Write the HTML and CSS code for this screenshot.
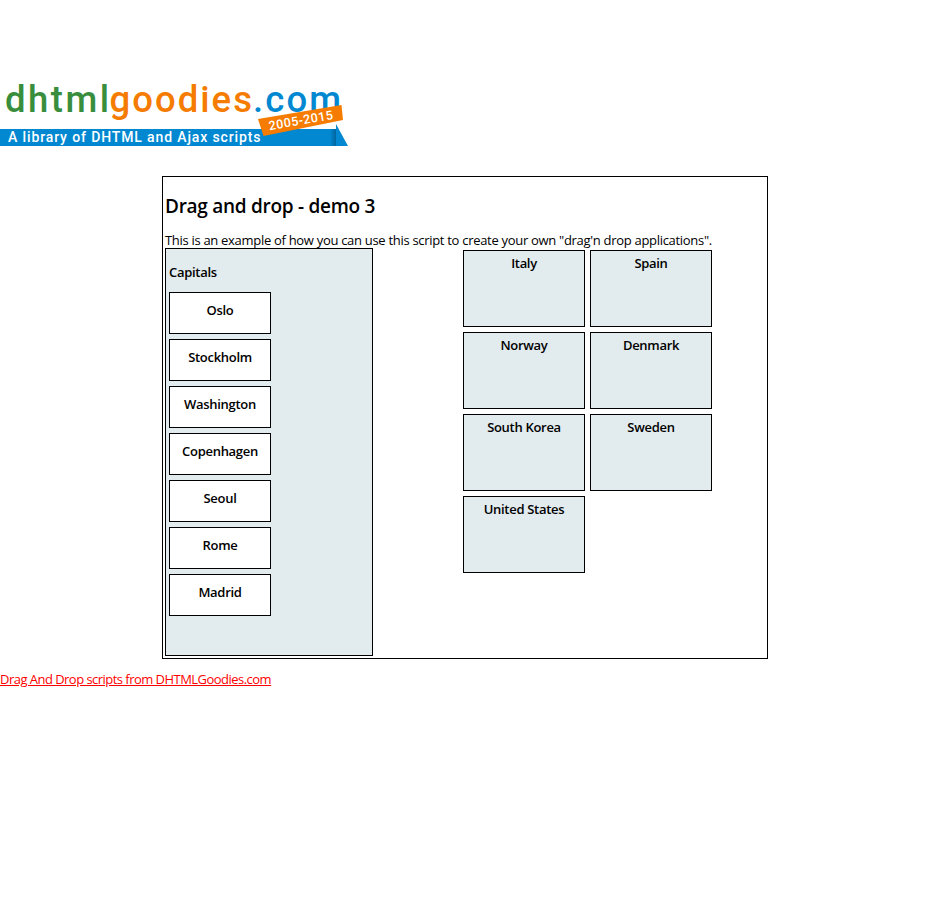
FILE: index.html
```html
<!DOCTYPE html>
<html lang="en">
<head>
<meta charset="utf-8">
<title>Drag and drop - demo 3</title>
<link rel="stylesheet" href="styles.css">
</head>
<body>
<header class="header">
<svg class="logo" width="350" height="90" viewBox="0 -20 350 90" role="img" aria-label="dhtmlgoodies.com">
  <defs>
    <linearGradient id="fold" x1="0" x2="1"><stop offset="0" stop-color="#0288d1"/><stop offset="1" stop-color="#03649d"/></linearGradient>
  </defs>
  <g class="wordmark">
    <text class="green" x="5" y="31.500" textLength="104">dhtml</text>
    <text class="orange" x="109.500" y="31.500" textLength="142.500">goodies</text>
    <text class="blue" x="253" y="31.500" textLength="88">.com</text>
  </g>
  <path class="blue" d="M0 49H336V66H0z"/>
  <path fill="url(#fold)" d="M330 49h6v17h-6z"/>
  <path class="blue" d="M336 44 348 66H336z"/>
  <path class="orange" d="M258 39 341.500 25 343 40 263.500 56z"/>
  <text class="tagline" x="8" y="62.300" textLength="252.500">A library of DHTML and Ajax scripts</text>
  <text class="years" transform="translate(269.500 50.200) rotate(-10)" textLength="65">2005-2015</text>
</svg>
</header>
<main class="main">
  <h1 class="title"><span>Drag and drop - demo 3</span></h1>
  <p class="intro">This is an example of how you can use this script to create your own "drag'n drop applications".</p>
  <div class="board">
    <section class="capitals">
      <h2 class="heading">Capitals</h2>
      <div class="list">
        <div class="capital">Oslo</div>
        <div class="capital">Stockholm</div>
        <div class="capital">Washington</div>
        <div class="capital">Copenhagen</div>
        <div class="capital">Seoul</div>
        <div class="capital">Rome</div>
        <div class="capital">Madrid</div>
      </div>
    </section>
    <section class="countries">
      <div class="country">Italy</div>
      <div class="country">Spain</div>
      <div class="country">Norway</div>
      <div class="country">Denmark</div>
      <div class="country">South Korea</div>
      <div class="country">Sweden</div>
      <div class="country">United States</div>
    </section>
  </div>
</main>
<footer class="footer"><a class="link" href="#">Drag And Drop scripts from DHTMLGoodies.com</a></footer>
</body>
</html>
```
FILE: styles.css
```css
* { box-sizing: border-box; }
body {
  margin: 0;
  background: #fff;
  color: #000;
  font: 13px/16px "Trebuchet MS", "Open Sans", sans-serif;
  letter-spacing: -0.3px;
}
.header { padding-top: 60px; height: 176px; }
.logo { display: block; letter-spacing: normal; font-family: Roboto, sans-serif; }
.wordmark { font-size: 36.5px; font-weight: 500; }
.green { fill: #388e3c; }
.orange { fill: #f57c00; }
.blue { fill: #0288d1; }
.tagline { fill: #fff; font-size: 14px; font-weight: 500; }
.years { fill: #fff; font-size: 12.5px; font-weight: 500; }
.main {
  width: 606px;
  height: 483px;
  margin: 0 auto 0 162px;
  padding: 0 2px;
  border: 1px solid #000;
}
.title {
  margin: 18px 0 14px;
  font-size: 19px;
  line-height: 23px;
  font-weight: 600;
  letter-spacing: -0.28px;
}
.intro { margin: 0; height: 16px; white-space: nowrap; }
.board { display: flex; justify-content: space-between; padding-right: 53px; }
.capitals {
  width: 208px;
  height: 408px;
  padding: 15px 3px 0;
  border: 1px solid #000;
  background: #e2ebed;
}
.heading { margin: 0 0 12px; font-size: 13px; line-height: 16px; font-weight: 600; }
.list { display: grid; gap: 5px; }
.capital {
  width: 102px;
  height: 42px;
  padding-top: 9px;
  border: 1px solid #000;
  background: #fff;
  text-align: center;
  font-weight: 600;
}
.countries {
  display: grid;
  grid-template-columns: 122px 122px;
  grid-auto-rows: 77px;
  gap: 5px;
  align-content: start;
  padding-top: 2px;
}
.country {
  padding-top: 4px;
  border: 1px solid #000;
  background: #e2ebed;
  text-align: center;
  font-weight: 600;
}
.footer { padding-top: 12px; }
.link { color: #f00; letter-spacing: -0.53px; }
```
